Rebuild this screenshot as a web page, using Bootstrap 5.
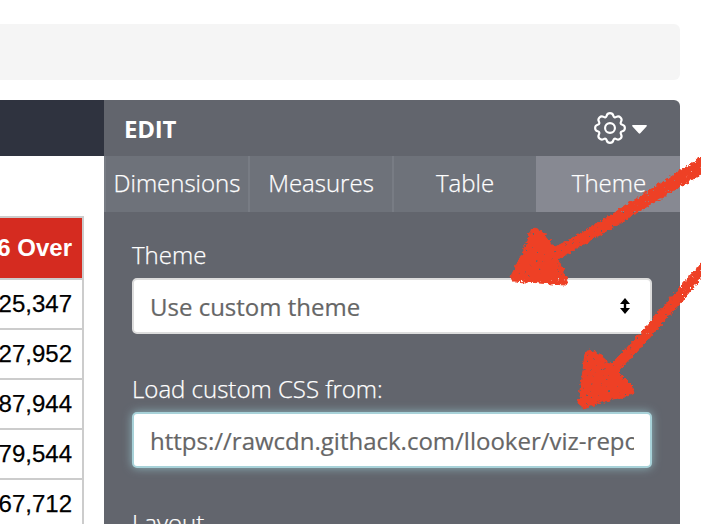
<!DOCTYPE html>
<html lang="en">
<head>
<meta charset="utf-8">
<meta name="viewport" content="width=device-width, initial-scale=1">
<title>Edit visualization</title>
<link href="https://cdn.jsdelivr.net/npm/bootstrap@5.3.0/dist/css/bootstrap.min.css" rel="stylesheet">
<style>
html, body { height: 100%; overflow: hidden; }
body { font-family: "Open Sans", sans-serif; font-size: 24px; background: #fff; }
.page { width: 701px; height: 524px; padding: 24px 21px 0 0; }
.topbar { height: 56px; background: #f5f5f5; border-radius: 0 6px 6px 0; margin-bottom: 20px; flex: none; }
.viz { width: 104px; flex: none; }
.viz-head { height: 56px; background: #2f333f; }
.figures { width: 240px; margin: 60px 20px 0 0; border-collapse: collapse; font: 24px/28px "Liberation Sans", Arial, sans-serif; color: #000; }
.figures th, .figures td { border: 2px solid #ccc; text-align: right; white-space: nowrap; height: 50px; padding: 0 10px 0 0; vertical-align: middle; }
.figures td { -webkit-text-stroke: .25px #000; }
.figures th { height: 62px; background: #d52b20; color: #fff; }
.editor { background: #62656d; color: #fff; border-radius: 0 6px 0 0; }
.editor-head { height: 56px; padding: 2px 33px 0 20px; }
.editor-title { font-size: 24px; line-height: 32px; font-weight: 700; letter-spacing: -.2px; }
.gear { width: 32px; height: 32px; margin-top: -2px; }
.caret { width: 15px; height: 9px; margin: 1px 0 0 6px; }
.tabs { height: 56px; }
.tabs .nav-link { border-radius: 0; background: #6e727a; border-left: 2px solid #787c84; color: #fff; font-weight: 300; padding: 0; height: 56px; line-height: 53px; white-space: nowrap; -webkit-text-stroke: .25px #fff; }
.tabs .nav-link.active { background: #878992; border-left-color: #878992; color: #fff; }
.fields { padding: 24px 28px 0; }
.fields .form-label { display: block; font-weight: 300; line-height: 38px; height: 38px; margin: 0 0 4px; -webkit-text-stroke: .25px #fff; }
.fields .form-control { height: 56px; padding: 2px 16px 0; border: 2px solid #ddd; border-radius: 5px; color: #666; font-size: 24px; line-height: 50px; background: #fff; -webkit-text-stroke: .2px #666; }
.picker { display: flex; align-items: center; justify-content: space-between; margin-bottom: 36px; }
.picker svg { width: 10px; height: 16px; margin: -2px 4px 0 0; }
.fields .url { padding-top: 1px; border-color: #a8d2d9; box-shadow: 0 0 10px rgba(160, 212, 220, .7); margin-bottom: 36px; }
.marks { left: 0; top: 0; pointer-events: none; }
</style>
<script src="https://cdn.jsdelivr.net/npm/bootstrap@5.3.0/dist/js/bootstrap.bundle.min.js"></script>
</head>
<body>
<div class="page position-relative d-flex flex-column overflow-hidden">
  <div class="topbar"></div>
  <div class="d-flex flex-grow-1">
    <section class="viz overflow-hidden">
      <div class="viz-head"></div>
      <div class="d-flex justify-content-end">
        <table class="figures flex-shrink-0">
          <thead><tr><th>6 Over</th></tr></thead>
          <tbody>
            <tr><td>25,347</td></tr>
            <tr><td>27,952</td></tr>
            <tr><td>87,944</td></tr>
            <tr><td>79,544</td></tr>
            <tr><td>67,712</td></tr>
          </tbody>
        </table>
      </div>
    </section>
    <section class="editor flex-grow-1">
      <header class="editor-head d-flex align-items-center justify-content-between">
        <div class="editor-title">EDIT</div>
        <div class="d-flex align-items-center">
          <svg class="gear" viewBox="-.6 -.6 17.2 17.2" fill="none" stroke="#fff" stroke-width="1.15"><circle cx="8" cy="8" r="2.65"/><path d="M9.796 1.343c-.527-1.79-3.065-1.79-3.592 0l-.094.319a.873.873 0 0 1-1.255.52l-.292-.16c-1.64-.892-3.433.902-2.54 2.541l.159.292a.873.873 0 0 1-.52 1.255l-.319.094c-1.79.527-1.79 3.065 0 3.592l.319.094a.873.873 0 0 1 .52 1.255l-.16.292c-.892 1.64.901 3.434 2.541 2.54l.292-.159a.873.873 0 0 1 1.255.52l.094.319c.527 1.79 3.065 1.79 3.592 0l.094-.319a.873.873 0 0 1 1.255-.52l.292.16c1.64.893 3.434-.902 2.54-2.541l-.159-.292a.873.873 0 0 1 .52-1.255l.319-.094c1.79-.527 1.79-3.065 0-3.592l-.319-.094a.873.873 0 0 1-.52-1.255l.16-.292c.893-1.64-.902-3.433-2.541-2.54l-.292.159a.873.873 0 0 1-1.255-.52z"/></svg>
          <svg class="caret" viewBox="0 0 15 9"><path d="M.8 0h13.4q1.2.4.3 1.4L8.3 8.3q-.8.7-1.6 0L.5 1.4Q-.4.4.8 0z" fill="#fff"/></svg>
        </div>
      </header>
      <nav class="tabs nav nav-justified flex-nowrap">
        <a class="nav-link w-25" href="#">Dimensions</a>
        <a class="nav-link w-25" href="#">Measures</a>
        <a class="nav-link w-25" href="#">Table</a>
        <a class="nav-link w-25 active" href="#">Theme</a>
      </nav>
      <div class="fields">
        <span class="form-label">Theme</span>
        <div class="form-control picker"><span>Use custom theme</span>
          <svg viewBox="0 0 10 16"><path d="M5 0l5 6H6.200v4H10l-5 6-5-6h3.800V6H0z" fill="#000"/></svg>
        </div>
        <label class="form-label" for="css-url">Load custom CSS from:</label>
        <input id="css-url" class="form-control url" type="text" value="https://rawcdn.githack.com/llooker/viz-report-table/master">
        <span class="form-label">Layout</span>
      </div>
    </section>
  </div>
  <svg class="marks position-absolute" width="701" height="524" viewBox="0 0 701 524">
    <defs>
      <filter id="crayon" x="0" y="0" width="720" height="524" filterUnits="userSpaceOnUse" color-interpolation-filters="sRGB">
        <feTurbulence type="fractalNoise" baseFrequency=".28" numOctaves="3" seed="4" result="n"/>
        <feDisplacementMap in="SourceGraphic" in2="n" scale="6" xChannelSelector="R" yChannelSelector="G" result="d"/>
        <feColorMatrix in="n" type="matrix" values="0 0 0 0 0  0 0 0 0 0  0 0 0 0 0  0 0 12 0 -2.2" result="holes"/>
        <feComposite in="d" in2="holes" operator="in"/>
      </filter>
    </defs>
    <g fill="#ee4025" stroke="#ee4025" stroke-width="1" stroke-linejoin="round" filter="url(#crayon)">
      <path d="M536 228L542 232L555 247C591 230 650 189 710 152L710 169C660 198 600 236 558 259L568 280L565 285L540 283L513 281L511 276L523 252L530 232Z"/>
      <path d="M590 350L597 353L611 364C641 335 672 295 710 253L710 268C677 306 650 339 618 372L633 387L634 394L609 400L584 408L578 403L582 378L585 353Z"/>
    </g>
  </svg>
</div>
</body>
</html>
